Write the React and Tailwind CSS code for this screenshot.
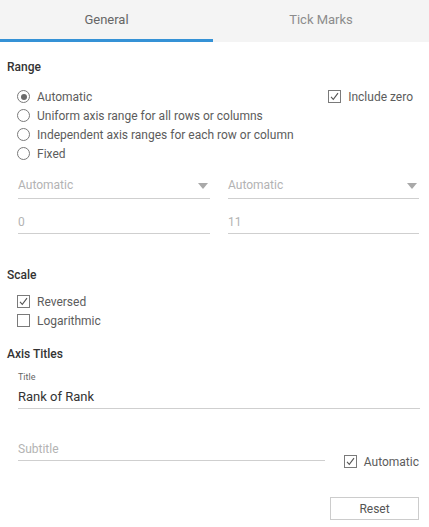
import React from "react";

function Radio({ checked, label }) {
  return (
    <div className="flex h-[19px] items-center">
      <span className="flex h-[13px] w-[13px] items-center justify-center rounded-full border border-[#7a7a7a] bg-white">
        {checked && <span className="h-[6px] w-[6px] rounded-full bg-[#6b6b6b]" />}
      </span>
      <span className="ml-[7px] text-[12px] text-[#5c5c5c]">{label}</span>
    </div>
  );
}

function Check({ checked, label }) {
  return (
    <div className="flex h-[19px] items-center">
      <span className="flex h-[13px] w-[13px] items-center justify-center border border-[#7a7a7a] bg-white">
        {checked && (
          <svg width="11" height="11" viewBox="0 0 11 11">
            <path d="M2 5.8 L4.3 8.3 L9 2.2" fill="none" stroke="#555" strokeWidth="1.1" />
          </svg>
        )}
      </span>
      <span className="ml-[7px] text-[12px] text-[#5c5c5c]">{label}</span>
    </div>
  );
}

function Dropdown({ label, className }) {
  return (
    <div className={"flex h-[23px] items-start justify-between border-b border-[#cfcfcf] " + className}>
      <span className="text-[12px] leading-[18px] text-[#b3b3b3]">{label}</span>
      <svg width="10" height="6" viewBox="0 0 10 6" className="mr-[2px] mt-[7px]">
        <path d="M0 0 L10 0 L5 6 Z" fill="#a9a9a9" />
      </svg>
    </div>
  );
}

export default function App() {
  return (
    <div
      className="h-[527px] w-[429px] overflow-hidden bg-white"
      style={{ fontFamily: "Roboto, 'Liberation Sans', Arial, sans-serif" }}
    >
      <div className="flex h-[42px] bg-[#f4f4f4]">
        <div className="flex w-[213px] items-center justify-center border-b-[3px] border-[#3592d6] text-[13px] text-[#666]">
          General
        </div>
        <div className="flex flex-1 items-center justify-center pb-[3px] text-[13px] text-[#8c8c8c]">
          Tick Marks
        </div>
      </div>

      <div className="mt-[17px] pl-[7px] text-[12px] font-medium leading-[16px] text-[#333]">Range</div>

      <div className="mt-[12px] flex pl-[17px] pr-[16px]">
        <div className="flex flex-1 flex-col">
          <Radio checked label="Automatic" />
          <Radio label="Uniform axis range for all rows or columns" />
          <Radio label="Independent axis ranges for each row or column" />
          <Radio label="Fixed" />
        </div>
        <div className="ml-[-120px] pt-0">
          <Check checked label="Include zero" />
        </div>
      </div>

      <div className="mt-[13px] flex gap-[18px] pl-[18px] pr-[10px]">
        <Dropdown label="Automatic" className="w-[192px]" />
        <Dropdown label="Automatic" className="flex-1" />
      </div>

      <div className="mt-[14px] flex gap-[18px] pl-[18px] pr-[10px]">
        <div className="h-[21px] w-[192px] border-b border-[#cfcfcf] text-[12px] leading-[18px] text-[#b3b3b3]">0</div>
        <div className="h-[21px] flex-1 border-b border-[#cfcfcf] text-[12px] leading-[18px] text-[#b3b3b3]">11</div>
      </div>

      <div className="mt-[33px] pl-[7px] text-[12px] font-medium leading-[16px] text-[#333]">Scale</div>
      <div className="mt-[9px] flex flex-col pl-[17px]">
        <Check checked label="Reversed" />
        <Check label="Logarithmic" />
      </div>

      <div className="mt-[16px] pl-[7px] text-[12px] font-medium leading-[16px] text-[#333]">Axis Titles</div>

      <div className="mt-[9px] pl-[18px] text-[9px] leading-[12px] text-[#666]">Title</div>
      <div className="ml-[18px] mr-[9px] mt-[5px] h-[21px] border-b border-[#cfcfcf] text-[13px] leading-[18px] text-[#333]">
        Rank of Rank
      </div>

      <div className="mt-[31px] flex items-start pl-[18px] pr-[10px]">
        <div className="h-[21px] w-[309px] border-b border-[#cfcfcf] text-[12px] leading-[18px] text-[#b3b3b3]">Subtitle</div>
        <div className="ml-[19px] mt-[12px]">
          <Check checked label="Automatic" />
        </div>
      </div>

      <div className="mt-[26px] flex justify-end pr-[10px]">
        <div className="flex h-[23px] w-[89px] items-center justify-center border border-[#cccccc] text-[12px] text-[#555]">
          Reset
        </div>
      </div>
    </div>
  );
}
